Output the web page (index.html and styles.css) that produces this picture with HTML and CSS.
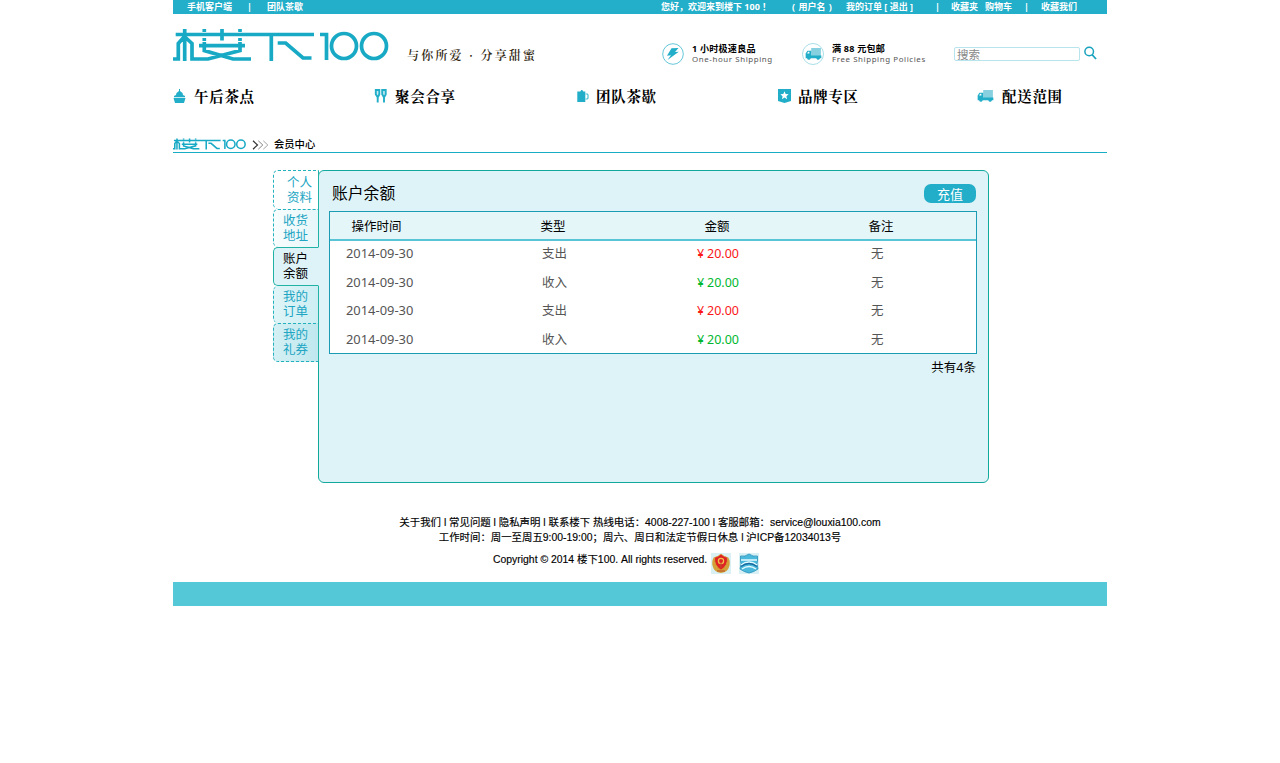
FILE: index.html
```
<!DOCTYPE html>
<html lang="zh-CN">
<head>
<meta charset="utf-8">
<title>楼下100 会员中心</title>
<link rel="stylesheet" href="styles.css">
</head>
<body>
<svg class="defs" width="0" height="0">
  <symbol id="logo" viewBox="0 28 216 34">
    <g fill="none" stroke="#18a9c5">
      <path d="M2.700 34.500H141M11.700 29v32M0 59h5.300V43.500L11.500 36.500M12.500 37.500L19 43.500V59H35L67 50.500V42M31.300 42V50.500L60 59H78M26 45.700H72M49 29V40.500M31.300 29v3M67 29v3M31.300 38v3M67 38v3M98.300 34v27M104.700 43h8L130 58h8.500M147 34.500h6.500V60"/>
      <circle cx="171" cy="46" r="12.500"/>
      <circle cx="201" cy="46" r="12.500"/>
    </g>
  </symbol>
  <symbol id="truck" viewBox="0 0 17 13">
    <path d="M6 0h10.500v9H6z" fill="#86d0df"/>
    <path d="M0 10V6l2-3h4v5h11v3H0z" fill="#22adc8"/>
    <path d="M1.500 6l1.200-2H4v2z" fill="#fff"/>
    <circle cx="3.500" cy="11" r="1.700" fill="#22adc8"/><circle cx="13.500" cy="11" r="1.700" fill="#22adc8"/>
  </symbol>
</svg>
<div class="page">
  <div class="topbar">
    <span>手机客户端</span><span>|</span><span>团队茶歇</span><span class="hello">您好，欢迎来到楼下 100 ！</span><span class="user">( 用户名 )</span><span class="orders">我的订单 [ 退出 ]</span><span>|</span><span>收藏夹</span><span>购物车</span><span>|</span><span>收藏我们</span>
  </div>
  <header class="header">
    <svg class="logo"><use href="#logo"/></svg>
    <div class="slogan">与你所爱 · 分享甜蜜</div>
    <svg class="badge" viewBox="0 0 22 22"><circle cx="11" cy="11" r="10.300" fill="#fff" stroke="#55c1d4" stroke-width=".9"/><path d="M9.500 5.300L16.500 5 13 9l3.800-.3L5.500 17 9 12.300l-4 .4z" fill="#22adc8"/></svg>
    <div class="promo promo-fast"><b>1 小时极速良品</b><span>One-hour Shipping</span></div>
    <div class="badge truck-badge"><svg><use href="#truck"/></svg></div>
    <div class="promo promo-free"><b>满 88 元包邮</b><span>Free Shipping Policies</span></div>
    <div class="search">搜索</div>
    <svg class="lens" viewBox="0 0 14 14"><circle cx="5.200" cy="5.500" r="4.300" fill="none" stroke="#18a2be" stroke-width="1.500"/><path d="M8 8.500L12 13" stroke="#18a2be" stroke-width="1.800"/></svg>
  </header>
  <nav class="nav">
    <a><svg viewBox="0 0 12 14"><path d="M5.500 0h1v2L9 4l.5 2 2 1v1.300H.500V7l2-1L3 4l2.500-2zM0 9h12l-1.500 5h-9z" fill="#22adc8"/></svg>午后茶点</a>
    <a><svg viewBox="0 0 12 14"><path d="M1.300 1h3.500v4.500L3.700 7.500h-1L1.300 5.300zM7.700 1h3.500v4.500L10 7.500H9L7.700 5.300zM3.200 7v6.500M9.500 7v6.500" fill="#c9edf3" stroke="#22adc8" stroke-width="1.900"/></svg>聚会合享</a>
    <a><svg viewBox="0 0 12 14"><path d="M.8 2.500h3l1-1.500h1l1 1.500h2V13h-8z" fill="#22adc8"/><path d="M9 5h1.800l.7 1v3l-.7 1H9" fill="none" stroke="#4abed2" stroke-width="1.200"/></svg>团队茶歇</a>
    <a><svg viewBox="0 0 13 14"><path d="M0 0h13v12l-6.500 2L0 12z" fill="#22adc8"/><path d="M6.500 2.300l1.200 2.800 3 .2-2.300 2 .7 2.900-2.600-1.600-2.600 1.600.7-2.900-2.300-2 3-.2z" fill="#fff"/></svg>品牌专区</a>
    <a class="delivery"><svg><use href="#truck"/></svg>配送范围</a>
  </nav>
  <div class="crumb">
    <svg class="mini-logo" viewBox="0 0 73 12" preserveAspectRatio="none"><use href="#logo" width="73" height="12"/></svg>
    <svg class="chevrons" viewBox="0 0 17 10" fill="none"><path d="M1 .8L5.500 5 1 9.200" stroke="#333" stroke-width="1.200"/><path d="M6.300.8L10.800 5 6.300 9.200" stroke="#777" stroke-width=".9"/><path d="M11.300.8L15.800 5l-4.500 4.200" stroke="#999" stroke-width=".9"/></svg>
    <span>会员中心</span>
  </div>
  <main class="account">
    <div class="tabs">
      <a class="tab first">个人<br>资料</a>
      <a class="tab second">收货<br>地址</a>
      <a class="tab active">账户<br>余额</a>
      <a class="tab fourth">我的<br>订单</a>
      <a class="tab last">我的<br>礼券</a>
    </div>
    <section class="panel">
      <div class="panel-head"><h1>账户余额</h1><button>充值</button></div>
      <div class="table">
        <div class="row head"><span>操作时间</span><span>类型</span><span>金额</span><span>备注</span></div>
        <div class="row"><span class="date">2014-09-30</span><span>支出</span><span class="out"><i>¥</i>20.00</span><span>无</span></div>
        <div class="row"><span class="date">2014-09-30</span><span>收入</span><span class="in"><i>¥</i>20.00</span><span>无</span></div>
        <div class="row"><span class="date">2014-09-30</span><span>支出</span><span class="out"><i>¥</i>20.00</span><span>无</span></div>
        <div class="row"><span class="date">2014-09-30</span><span>收入</span><span class="in"><i>¥</i>20.00</span><span>无</span></div>
      </div>
      <div class="total">共有4条</div>
    </section>
  </main>
  <footer class="footer">
    <p class="links">关于我们 l 常见问题 l 隐私声明 l 联系楼下 热线电话：4008-227-100 l 客服邮箱：service@louxia100.com</p>
    <p class="hours">工作时间：周一至周五9:00-19:00；周六、周日和法定节假日休息 l 沪ICP备12034013号</p>
    <div class="copyright"><span>Copyright © 2014 楼下100. All rights reserved.</span>
      <svg viewBox="0 0 20 21"><path fill="#d9f1f5" d="M0 0h20v21H0z"/><path d="M3 4Q0 9 2 14q1 5 8 6 7-1 8-6 2-5-1-10l-3 10H6z" fill="#d3a039"/><path d="M3.500 4.500Q7 4 10 1q3 3 6.500 3.500Q17 13 10 17 3 13 3.500 4.500z" fill="#df2426" stroke="#d9a52e" stroke-width=".7"/><circle cx="10" cy="8" r="2.600" fill="none" stroke="#f0c24a" stroke-width="1.200"/><path d="M10 10v5M6 18h8" stroke="#b8502c" stroke-width="1"/></svg>
      <svg viewBox="0 0 20 21"><path fill="#d9f1f5" d="M0 0h20v21H0z"/><path d="M1.500 3q4.500 1 8.500-2 4 3 8.500 2v5l-.5 3 1 5q-4 3-9 4-5-1-9-4l1-5-.5-3z" fill="#4ab9dc" stroke="#2b8fb9" stroke-width=".8"/><path d="M2 7h16M2 12q8-6 16 0M3 16q7-5 14 0" fill="none" stroke="#e5faff" stroke-width="1.500"/><path d="M2 13.500q8-6 16 0" fill="none" stroke="#176a9f" stroke-width="1.300"/></svg>
    </div>
  </footer>
  <div class="bottom-bar"></div>
</div>
</body>
</html>
```
FILE: styles.css
```
* { box-sizing: border-box; }
body { margin: 0; background: #fff; font-family: "Noto Sans", "Noto Sans CJK SC", sans-serif; color: #000; }
svg { display: block; }
.defs { position: absolute; }
.page { width: 934px; margin: 0 auto; }

.topbar { display: grid; grid-template-columns: 60px 20px 394px 131px 54px 89px 16px 34px 39px 17px 1fr; padding-left: 14px; height: 14px; background: #23aec9; color: #fff; font: bold 9px/14px "Noto Sans", "Noto Sans CJK SC", sans-serif; white-space: nowrap; }
.user { word-spacing: 1px; }

.header { display: flex; align-items: flex-start; height: 70px; padding-top: 14px; white-space: nowrap; }
.logo { width: 216px; height: 34px; stroke-width: 3.700px; }
.slogan { width: 255px; margin: 18px 0 0 18px; font: 600 12px/17px "Noto Serif CJK SC", "Noto Sans CJK SC", serif; letter-spacing: 2.200px; color: #2d230c; }
.badge { flex: none; width: 22px; height: 22px; margin-top: 15px; }
.promo { margin: 16px 0 0 8px; }
.promo b, .promo span { display: block; height: 10px; line-height: 10px; }
.promo b { font-size: 9.100px; letter-spacing: .2px; }
.promo span { font-size: 7.900px; letter-spacing: .6px; color: #555; }
.promo-fast { width: 110px; }
.promo-free { width: 122px; }
.truck-badge { display: flex; align-items: center; justify-content: center; border: 1px solid #aadfe8; border-radius: 50%; }
.truck-badge svg { width: 17px; height: 12px; }
.search { flex: none; width: 126px; height: 14px; margin: 19px 4px 0 0; padding-left: 2px; border: 1px solid #b7e4ed; border-radius: 2px; font-size: 11.500px; line-height: 13px; color: #888; }
.lens { flex: none; width: 14px; height: 14px; margin-top: 18px; }

.nav { display: grid; grid-template-columns: 201px 202px 202px 199px 1fr; height: 54px; padding-top: 2px; }
.nav a { display: flex; align-items: center; gap: 8px; height: 20px; font: bold 14.500px/20px "Noto Serif CJK SC", "Noto Sans CJK SC", serif; letter-spacing: .7px; }
.nav svg { width: 13px; height: 14px; }
.nav a:nth-child(3), .nav a:nth-child(4) { gap: 7px; }
.nav .delivery svg { width: 17px; height: 12px; }

.crumb { display: flex; height: 15px; border-bottom: 1px solid #19adc3; }
.mini-logo { width: 73px; height: 12px; stroke-width: 4.500px; }
.chevrons { width: 17px; height: 10px; margin: 2px 5px 0 6px; }
.crumb span { font-size: 10.300px; font-weight: 500; line-height: 13px; }

.account { display: flex; align-items: flex-start; padding: 17px 0 0 100px; }
.tabs { position: relative; z-index: 1; width: 46px; margin-right: -1px; }
.tab { display: block; height: 38px; padding: 4px 0 0 9px; border: 1px dashed #22b1bd; border-width: 1px 1px 0 1px; border-right: 1px solid #20b2a5; border-radius: 5px 0 0 5px; color: #20a5c3; font-size: 12.500px; line-height: 14.500px; background: linear-gradient(90deg, #f8fdfd, #e6f6f9); }
.tab.first { height: 39px; padding: 5px 0 0 13px; background: #fff; }
.tab.active { height: 39px; border: 1px solid #20b2a5; border-right-color: #def3f7; background: #def3f7; color: #000; }
.tab.fourth { border-top: 0; height: 37px; background: linear-gradient(90deg, #e0f5f7, #cceef3); }
.tab.last { height: 39px; border-bottom: 1px dashed #22b1bd; background: linear-gradient(90deg, #d4f0f4, #bfe8ee); }
.panel { width: 671px; height: 313px; padding: 0 11px 0 10px; border: 1px solid #12a99d; border-radius: 6px; background: #def3f7; }
.panel-head { display: flex; justify-content: space-between; height: 40px; padding: 12px 1px 0 3px; }
h1 { margin: 0; font-weight: 400; font-size: 15.800px; line-height: 21px; }
button { width: 52px; height: 19px; margin-top: 1px; padding: 0; border: 0; border-radius: 7px; background: #22adc8; color: #fff; font: 13px/17px "Noto Sans CJK SC", sans-serif; }
.table { width: 648px; height: 143px; border: 1px solid #1b9cb4; background: #fff; }
.row { display: grid; grid-template-columns: 196px 155px 174px 1fr; height: 28.500px; padding-left: 16px; font: 12.500px/26px "Noto Sans", "Noto Sans CJK SC", sans-serif; color: #555; }
.date { font-size: 12.900px; line-height: 25px; }
.row i { display: inline-block; width: 10px; font-style: normal; font-size: 12.500px; }
.head { grid-template-columns: 189px 164px 164px 1fr; height: 29px; padding-left: 21.500px; border-bottom: 2px solid #59c4d5; background: #e5f6f9; color: #000; line-height: 29px; }
.out { color: #fa1717; }
.in { color: #00b82e; }
.total { text-align: right; padding-right: 1px; font-size: 12.500px; line-height: 27px; }

.footer { height: 99px; padding-top: 32px; font: 10.420px/15px "Liberation Sans", "Noto Sans CJK SC", sans-serif; text-align: center; white-space: nowrap; -webkit-text-stroke: .15px #000; }
.footer p { margin: 0; }
.copyright { display: flex; height: 28px; padding: 8px 0 0 320px; }
.copyright span { width: 218px; text-align: left; line-height: 13px; }
.copyright svg { width: 20px; height: 21px; margin-right: 8px; }
.bottom-bar { height: 24px; background: #54c8d7; }
```
